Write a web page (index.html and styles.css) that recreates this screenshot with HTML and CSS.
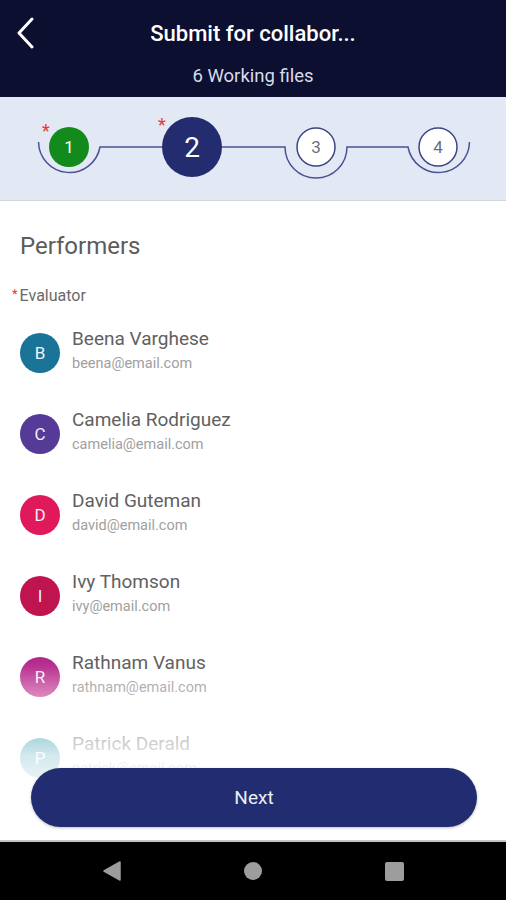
FILE: index.html
```html
<!DOCTYPE html>
<html lang="en">
<head>
<meta charset="utf-8"/>
<title>Submit for collaboration</title>
<link rel="stylesheet" href="styles.css">
</head>
<body>
<div class="screen">
    <header class="topbar">
        <button class="back" aria-label="Back">
            <svg width="20" height="32" viewBox="0 0 20 32"><path d="M16 2 L3 16 L16 30" fill="none" stroke="#fff" stroke-width="3" stroke-linecap="round" stroke-linejoin="round"/></svg>
        </button>
        <h1 class="title">Submit for collabor...</h1>
        <p class="subtitle">6 Working files</p>
    </header>

    <section class="stepper">
        <svg class="steps" width="506" height="103" viewBox="0 0 506 103">
            <g fill="none" stroke="#4b5294" stroke-width="1.5">
                <path d="M38.5 45 A31 31 0 0 0 100 50 H162"/>
                <path d="M222 50 H285 A31 31 0 0 0 347 50 H408 A31 31 0 0 0 469.5 45"/>
            </g>
            <circle cx="69" cy="50" r="20" fill="#128a1c"/>
            <text class="num" x="69" y="56" fill="#fff">1</text>
            <circle cx="192" cy="50" r="30" fill="#222c6e"/>
            <text class="num big" x="192" y="60" fill="#fff">2</text>
            <circle cx="316" cy="50" r="19" fill="#fff" stroke="#3d4583" stroke-width="1.5"/>
            <text class="num" x="316" y="56" fill="#6b6d80">3</text>
            <circle cx="438" cy="50" r="19" fill="#fff" stroke="#3d4583" stroke-width="1.5"/>
            <text class="num" x="438" y="56" fill="#6b6d80">4</text>
            <text class="star" x="46" y="40">*</text>
            <text class="star" x="162" y="34">*</text>
        </svg>
    </section>

    <main class="content">
        <h2 class="section-title">Performers</h2>
        <div class="field-label"><span class="req">*</span>Evaluator</div>
        <ul class="people">
            <li class="person">
                <span class="avatar av-teal">B</span>
                <div class="info"><span class="name">Beena Varghese</span><span class="email">beena@email.com</span></div>
            </li>
            <li class="person">
                <span class="avatar av-purple">C</span>
                <div class="info"><span class="name">Camelia Rodriguez</span><span class="email">camelia@email.com</span></div>
            </li>
            <li class="person">
                <span class="avatar av-red">D</span>
                <div class="info"><span class="name">David Guteman</span><span class="email">david@email.com</span></div>
            </li>
            <li class="person">
                <span class="avatar av-crimson">I</span>
                <div class="info"><span class="name">Ivy Thomson</span><span class="email">ivy@email.com</span></div>
            </li>
            <li class="person">
                <span class="avatar av-magenta">R</span>
                <div class="info"><span class="name">Rathnam Vanus</span><span class="email">rathnam@email.com</span></div>
            </li>
            <li class="person">
                <span class="avatar av-sea">P</span>
                <div class="info"><span class="name">Patrick Derald</span><span class="email">patrick@email.com</span></div>
            </li>
        </ul>
        <div class="fade"></div>
        <button class="next">Next</button>
    </main>

    <nav class="sysbar">
        <svg width="18" height="20" viewBox="0 0 18 20"><path d="M1 10 L17 1 L17 19 Z" fill="#9d9d9d" stroke="#9d9d9d" stroke-width="1.5" stroke-linejoin="round"/></svg>
        <svg width="18" height="18" viewBox="0 0 18 18"><circle cx="9" cy="9" r="9" fill="#9d9d9d"/></svg>
        <svg width="19" height="19" viewBox="0 0 19 19"><rect x="0" y="0" width="19" height="19" rx="2" fill="#9d9d9d"/></svg>
    </nav>
</div>
</body>
</html>
```

FILE: styles.css
```css
* {
    box-sizing: border-box;
}
body {
    margin: 0;
    font-family: Roboto, "Noto Sans", sans-serif;
    background: #fff;
}
.screen {
    width: 506px;
    height: 900px;
    display: flex;
    flex-direction: column;
    overflow: hidden;
}

/* header */
.topbar {
    height: 97px;
    background: #0c0f30;
    display: grid;
    grid-template-columns: 56px 1fr 56px;
    grid-template-rows: auto auto;
    padding-top: 21px;
}
.back {
    grid-column: 1;
    grid-row: 1;
    background: none;
    border: 0;
    padding: 0 0 0 16px;
    margin-top: -5px;
    height: 34px;
    display: flex;
    align-items: center;
}
.title {
    grid-column: 2;
    grid-row: 1;
    margin: 0;
    text-align: center;
    color: #fff;
    font-size: 22px;
    line-height: 26px;
    font-weight: 500;
}
.subtitle {
    grid-column: 1 / -1;
    grid-row: 2;
    margin: 4px 0 0;
    text-align: center;
    color: #d9dbe7;
    font-size: 18.5px;
    line-height: 24px;
}

/* stepper */
.stepper {
    height: 104px;
    background: #e3e8f5;
    border-bottom: 1px solid #d2d6df;
}
.steps {
    display: block;
}
.num {
    font-family: Roboto, sans-serif;
    font-size: 17px;
    text-anchor: middle;
}
.num.big {
    font-size: 28px;
}
.star {
    font-family: Roboto, sans-serif;
    font-size: 18px;
    fill: #e8382f;
    text-anchor: middle;
}

/* list */
.content {
    flex: 1;
    position: relative;
    padding: 31px 0 0 20px;
}
.section-title {
    margin: 0;
    font-size: 24px;
    line-height: 28px;
    font-weight: 400;
    color: #5c5c5c;
}
.field-label {
    margin: 24px 0 0 -8px;
    font-size: 16px;
    line-height: 20px;
    color: #6a6a6a;
}
.req {
    color: #e8382f;
    font-size: 13px;
    vertical-align: 3px;
    margin-right: 2px;
}
.people {
    list-style: none;
    margin: 6px 0 0;
    padding: 0;
}
.person {
    height: 81px;
    display: flex;
    align-items: center;
    gap: 12px;
}
.avatar {
    width: 40px;
    height: 40px;
    border-radius: 50%;
    flex: none;
    display: flex;
    align-items: center;
    justify-content: center;
    color: #f2f2f6;
    font-size: 17px;
}
.av-teal { background: #1a7497; }
.av-purple { background: #563a98; }
.av-red { background: #e0195b; }
.av-crimson { background: #bf1450; }
.av-magenta { background: linear-gradient(#b0268a, #cf5aa6); }
.av-sea { background: #138aa2; }
.info {
    display: flex;
    flex-direction: column;
    padding-bottom: 4px;
}
.name {
    font-size: 19px;
    line-height: 24px;
    color: #616161;
}
.email {
    margin-top: 3px;
    font-size: 14.5px;
    line-height: 20px;
    color: #a0a0a0;
}
.fade {
    position: absolute;
    left: 0;
    right: 0;
    top: 465px;
    bottom: 0;
    background: linear-gradient(rgba(255,255,255,0), rgba(255,255,255,0.82) 52%, #fff 80%);
}
.next {
    position: absolute;
    left: 31px;
    right: 29px;
    bottom: 13px;
    height: 59px;
    border: 0;
    border-radius: 30px;
    background: #222c70;
    color: #eceef6;
    font-family: Roboto, sans-serif;
    font-size: 19px;
    box-shadow: 0 1px 3px rgba(0,0,0,0.25);
}

/* android nav */
.sysbar {
    height: 60px;
    flex: none;
    background: #000;
    border-top: 2px solid #c4c4c4;
    display: flex;
    align-items: center;
    justify-content: center;
    gap: 123px;
}
```
